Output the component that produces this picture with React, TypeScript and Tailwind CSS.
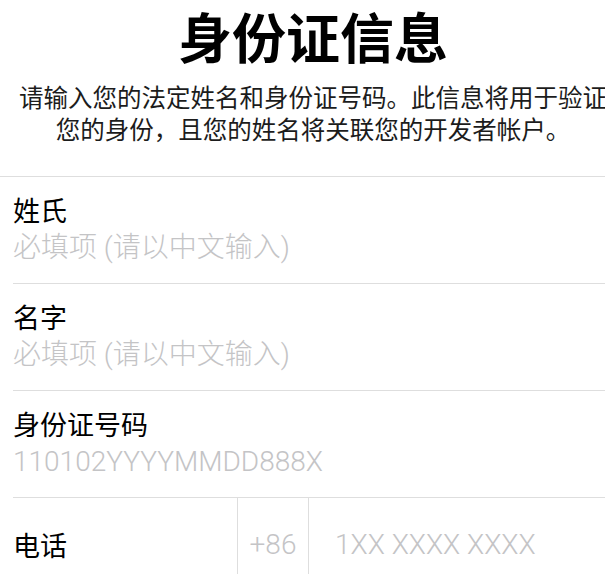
const cjk = "font-['Noto_Sans_CJK_SC',sans-serif]";
const latin = "font-['Roboto','Noto_Sans_CJK_SC',sans-serif]";

const fields = [
  { label: "姓氏", placeholder: "必填项 (请以中文输入)" },
  { label: "名字", placeholder: "必填项 (请以中文输入)" },
  { label: "身份证号码", placeholder: "110102YYYYMMDD888X" },
];

function FieldRow({ label, placeholder }: { label: string; placeholder: string }) {
  return (
    <div className="ml-[13px] border-b border-[#dedede] pt-[15px] pb-[16px]">
      <p className={`${cjk} text-[27px] leading-[36px] text-black`}>{label}</p>
      <p className={`${latin} mt-px text-[28px] leading-[38px] font-light text-[#c4c4c6]`}>{placeholder}</p>
    </div>
  );
}

export default function App() {
  return (
    <div className="h-[574px] w-[605px] overflow-hidden bg-white">
      <header className="w-[626px] pt-[9px] pb-[31px] text-center">
        <h1 className={`${cjk} text-[54px] leading-none font-bold text-black`}>身份证信息</h1>
        <p className={`${cjk} mt-[18px] text-[24.5px] leading-[32px] whitespace-nowrap text-[#1c1c1c]`}>
          请输入您的法定姓名和身份证号码。此信息将用于验证
          <br />
          您的身份，且您的姓名将关联您的开发者帐户。
        </p>
      </header>

      <section className="border-t border-[#dedede]">
        {fields.map((f) => (
          <FieldRow key={f.label} label={f.label} placeholder={f.placeholder} />
        ))}

        <div className="ml-[13px] flex h-[94px]">
          <div className={`${cjk} flex w-[224px] items-center text-[27px] text-black`}>电话</div>
          <div className={`${latin} flex w-[72px] items-center justify-center border-x border-[#dedede] text-[28px] font-light text-[#c4c4c6]`}>
            +86
          </div>
          <div className={`${latin} flex flex-1 items-center pl-[26px] text-[28px] font-light text-[#c4c4c6]`}>
            1XX XXXX XXXX
          </div>
        </div>
      </section>
    </div>
  );
}
